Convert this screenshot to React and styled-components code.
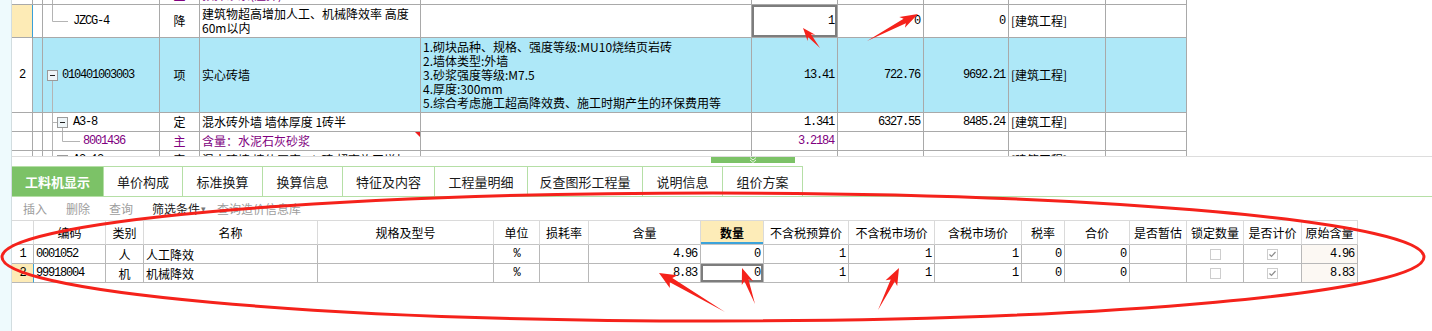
import React from "react";
import styled, { createGlobalStyle } from "styled-components";

const MONO = `"Liberation Mono", "Noto Sans CJK SC", monospace`;
const GRID = "#a9a9a9";
const GREEN = "#7cc267";
const GREEN_LINE = "#b5dfa6";

const GlobalStyle = createGlobalStyle`
  html, body {
    margin: 0;
    padding: 0;
    background: #fff;
  }
  body {
    font-family: "Noto Sans CJK SC", "Liberation Sans", sans-serif;
    font-size: 12px;
    color: #000;
  }
`;

// 上方清单表格
const TOP_COLS = "21px 10px 117px 40px 221px 331px 86px 86px 85px 97px 81px";

const TOP_ROWS = [
  { h: 19, tree: "leaf", code: "8001495-01", type: "主", name: "预拌砂浆(湿拌)", qty: "0.2678", purple: true },
  {
    h: 33, tree: "child", code: "JZCG-4", type: "降",
    name: "建筑物超高增加人工、机械降效率 高度\n60m以内",
    qty: "1", price: "0", total: "0", spec: "[建筑工程]", marker: true, pickQty: true,
  },
  {
    h: 75, num: "2", tree: "root", code: "010401003003", type: "项", name: "实心砖墙",
    desc: "1.砌块品种、规格、强度等级:MU10烧结页岩砖\n2.墙体类型:外墙\n3.砂浆强度等级:M7.5\n4.厚度:300mm\n5.综合考虑施工超高降效费、施工时期产生的环保费用等",
    qty: "13.41", price: "722.76", total: "9692.21", spec: "[建筑工程]", blue: true,
  },
  { h: 19, tree: "sub", code: "A3-8", type: "定", name: "混水砖外墙 墙体厚度 1砖半", qty: "1.341", price: "6327.55", total: "8485.24", spec: "[建筑工程]" },
  { h: 19, tree: "leaf", code: "8001436", type: "主", name: "含量：水泥石灰砂浆", qty: "3.2184", purple: true, flag: true },
  { h: 19, tree: "sub", code: "A3-12", type: "定", name: "混水砖墙 墙体厚度 1/2砖 超高施工增加", spec: "[建筑工程]" },
];

// 下方工料机表格
const BOT_COLS = "22px 72px 38px 174px 176px 46px 49px 112px 63px 85px 86px 87px 43px 65px 57px 57px 58px 56px";
const BOT_HEAD = ["", "编码", "类别", "名称", "规格及型号", "单位", "损耗率", "含量", "数量", "不含税预算价", "不含税市场价", "含税市场价", "税率", "合价", "是否暂估", "锁定数量", "是否计价", "原始含量"];
const BOT_ROWS = [
  { num: "1", code: "0001052", type: "人", name: "人工降效", amount: "4.96" },
  { num: "2", code: "99918004", type: "机", name: "机械降效", amount: "8.83", marker: true, pickQty: true },
];

const TABS = [
  ["工料机显示", 92], ["单价构成", 79], ["标准换算", 80], ["换算信息", 80], ["特征及内容", 92],
  ["工程量明细", 93], ["反查图形工程量", 115], ["说明信息", 80], ["组价方案", 80],
];

const ARROWS = [
  { tail: [725, 312], tip: [659, 273], hl: 14, hw: 15, sw: 5 },
  { tail: [755, 304], tip: [742, 268], hl: 13, hw: 12, sw: 4.5 },
  { tail: [878, 310], tip: [899, 268], hl: 14, hw: 13, sw: 4.5 },
  { tail: [820, 48], tip: [803, 28], hl: 10, hw: 10, sw: 4 },
  { tail: [867, 41], tip: [918, 14], hl: 15, hw: 12, sw: 5 },
];

function arrowPoints(tail, tip, hl, hw, sw) {
  const [tx, ty] = tail;
  const [hx, hy] = tip;
  const len = Math.hypot(hx - tx, hy - ty);
  const ux = (hx - tx) / len;
  const uy = (hy - ty) / len;
  const px = -uy;
  const py = ux;
  const bx = hx - ux * hl;
  const by = hy - uy * hl;
  const pts = [
    [tx, ty],
    [bx + (px * sw) / 2, by + (py * sw) / 2],
    [bx + (px * hw) / 2 - ux * 3, by + (py * hw) / 2 - uy * 3],
    [hx, hy],
    [bx - (px * hw) / 2 - ux * 3, by - (py * hw) / 2 - uy * 3],
    [bx - (px * sw) / 2, by - (py * sw) / 2],
  ];
  return pts.map((p) => p.map((v) => v.toFixed(1)).join(",")).join(" ");
}

function Tree({ kind, h }) {
  const mid = Math.floor(h / 2) + 0.5;
  const line = "#b4b4b4";
  const box = (x) => (
    <g>
      <rect x={x + 0.5} y={mid - 5} width="10" height="10" fill="#eef5f8" stroke="#9a9a9a" />
      <line x1={x + 3} y1={mid} x2={x + 8} y2={mid} stroke="#222" />
    </g>
  );
  if (kind === "child") {
    return (
      <TreeSvg width="30" height={h}>
        <path d={`M9.5 0 V${mid} H25`} stroke={line} fill="none" />
      </TreeSvg>
    );
  }
  if (kind === "root") {
    return (
      <TreeSvg width="19" height={h}>
        <path d={`M9.5 ${mid + 5} V${h}`} stroke={line} />
        {box(4)}
      </TreeSvg>
    );
  }
  if (kind === "sub") {
    return (
      <TreeSvg width="30" height={h}>
        <path d={`M9.5 0 V${h} M9.5 ${mid} H14 M19.5 ${mid + 5} V${h}`} stroke={line} fill="none" />
        {box(14)}
      </TreeSvg>
    );
  }
  return (
    <TreeSvg width="40" height={h}>
      <path d={`M9.5 0 V${h} M19.5 0 V${mid} H37`} stroke={line} fill="none" />
    </TreeSvg>
  );
}

function CheckBox({ checked }) {
  return (
    <Check>
      {checked && (
        <svg width="9" height="9" viewBox="0 0 9 9">
          <path d="M1.5 4.5 L3.5 6.5 L7.5 2" stroke="#8c8c8c" strokeWidth="1.2" fill="none" />
        </svg>
      )}
    </Check>
  );
}

function App() {
  return (
    <Page>
      <GlobalStyle />
      <LeftStrip />
      <Main>
        <TopPane>
          <TopTable>
            {TOP_ROWS.map((r, i) => (
              <TopRow key={i} $h={r.h} $bg={r.blue ? "#aee8f8" : "#fff"}>
                <TCell $align="center" $mono $bg={r.marker ? "#fdebb6" : "#fff"} $marker={r.marker}>
                  {r.num}
                </TCell>
                <TCell />
                <TCell $tree $purple={r.purple}>
                  <Tree kind={r.tree} h={r.h - 1} />
                  <Mono>{r.code}</Mono>
                </TCell>
                <TCell $align="center" $purple={r.purple}>{r.type}</TCell>
                <TCell $purple={r.purple} $flag={r.flag}>{r.name}</TCell>
                <TCell>{r.desc}</TCell>
                <TCell $align="right" $mono $purple={r.purple} $picked={r.pickQty}>{r.qty}</TCell>
                <TCell $align="right" $mono>{r.price}</TCell>
                <TCell $align="right" $mono>{r.total}</TCell>
                <TCell>{r.spec}</TCell>
                <TCell />
              </TopRow>
            ))}
          </TopTable>
        </TopPane>

        <Splitter>
          <Handle>
            <svg width="10" height="6" viewBox="0 0 10 6">
              <path d="M2 0.5 L5 3 L8 0.5 M2 3 L5 5.5 L8 3" stroke="#e8f5e2" fill="none" />
            </svg>
          </Handle>
        </Splitter>

        <TabBar>
          {TABS.map(([label, w], i) => (
            <Tab key={label} $w={w} $active={i === 0}>{label}</Tab>
          ))}
        </TabBar>

        <Toolbar>
          <ToolItem>插入</ToolItem>
          <ToolItem>删除</ToolItem>
          <ToolItem>查询</ToolItem>
          <ToolItem $on>
            筛选条件<Caret>▾</Caret>
          </ToolItem>
          <ToolItem>查询造价信息库</ToolItem>
        </Toolbar>

        <BotTable>
          <BotRow $head>
            {BOT_HEAD.map((h, i) => (
              <HCell key={i} $sort={h === "数量"}>{h}</HCell>
            ))}
          </BotRow>
          {BOT_ROWS.map((r) => (
            <BotRow key={r.num}>
              <BCell $align="center" $mono $bg={r.marker ? "#fdebb6" : "#fff"} $marker={r.marker}>{r.num}</BCell>
              <BCell $mono>{r.code}</BCell>
              <BCell $align="center">{r.type}</BCell>
              <BCell>{r.name}</BCell>
              <BCell />
              <BCell $align="center" $mono>%</BCell>
              <BCell />
              <BCell $align="right" $mono>{r.amount}</BCell>
              <BCell $align="right" $mono $picked={r.pickQty}>0</BCell>
              <BCell $align="right" $mono>1</BCell>
              <BCell $align="right" $mono>1</BCell>
              <BCell $align="right" $mono>1</BCell>
              <BCell $align="right" $mono>0</BCell>
              <BCell $align="right" $mono>0</BCell>
              <BCell />
              <BCell $align="center"><CheckBox /></BCell>
              <BCell $align="center"><CheckBox checked /></BCell>
              <BCell $align="right" $mono $bg="#fcf8f3">{r.amount}</BCell>
            </BotRow>
          ))}
        </BotTable>
      </Main>

      {/* 红色标注 */}
      <Overlay width="1432" height="331" viewBox="0 0 1432 331">
        <ellipse cx="713" cy="257" rx="711" ry="64" fill="none" stroke="#f5221b" strokeWidth="3" />
        {ARROWS.map((a, i) => (
          <polygon key={i} points={arrowPoints(a.tail, a.tip, a.hl, a.hw, a.sw)} fill="#f5221b" />
        ))}
      </Overlay>
    </Page>
  );
}

export default App;

const Page = styled.div`
  position: relative;
  display: flex;
  width: 1432px;
  height: 331px;
  overflow: hidden;
  background: #fff;
`;

const LeftStrip = styled.div`
  width: 11px;
  flex: none;
  background: #eefafd;
  border-right: 1px solid #d2dde0;
`;

const Main = styled.div`
  flex: 1;
  display: flex;
  flex-direction: column;
  min-width: 0;
`;

const TopPane = styled.div`
  height: 156px;
  overflow: hidden;
  border-bottom: 1px solid #dddddd;
`;

const TopTable = styled.div`
  margin-top: -14px;
`;

const TopRow = styled.div`
  display: grid;
  grid-template-columns: ${TOP_COLS};
  width: 1175px;
  height: ${(p) => p.$h}px;
  background: ${(p) => p.$bg};
`;

const TCell = styled.div`
  position: relative;
  display: flex;
  align-items: center;
  justify-content: ${(p) => (p.$align === "right" ? "flex-end" : p.$align === "center" ? "center" : "flex-start")};
  padding: ${(p) => (p.$tree ? "0" : p.$align === "right" ? "0 3px 0 0" : p.$align === "center" ? "0" : "0 0 0 2px")};
  box-sizing: border-box;
  border-right: 1px solid ${(p) => (p.$marker ? "#3a9fd8" : GRID)};
  border-bottom: 1px solid ${GRID};
  background: ${(p) => p.$bg || "transparent"};
  box-shadow: ${(p) => (p.$picked ? "inset 0 0 0 2px #7d7d7d" : "none")};
  color: ${(p) => (p.$purple ? "#800080" : "#000")};
  font-family: ${(p) => (p.$mono ? MONO : "inherit")};
  font-size: 12px;
  letter-spacing: ${(p) => (p.$mono ? "-1.2px" : "0")};
  line-height: 14px;
  white-space: pre-line;
  overflow: hidden;

  &::after {
    content: "";
    display: ${(p) => (p.$flag ? "block" : "none")};
    position: absolute;
    top: 0;
    right: 0;
    border-top: 5px solid #ee1c1c;
    border-left: 5px solid transparent;
  }
`;

const TreeSvg = styled.svg`
  flex: none;
  display: block;
`;

const Mono = styled.span`
  font-family: ${MONO};
  font-size: 12px;
  letter-spacing: -1.2px;
`;

const Splitter = styled.div`
  height: 9px;
  flex: none;
`;

const Handle = styled.div`
  margin-left: 699px;
  width: 84px;
  height: 6px;
  background: ${GREEN};
  display: flex;
  justify-content: center;
  align-items: flex-start;
`;

const TabBar = styled.div`
  display: flex;
  height: 31px;
  flex: none;
  box-sizing: border-box;
  border-bottom: 1px solid ${GREEN_LINE};
`;

const Tab = styled.div`
  width: ${(p) => p.$w}px;
  box-sizing: border-box;
  display: flex;
  align-items: center;
  justify-content: center;
  border-top: 1px solid ${GREEN_LINE};
  border-right: 1px solid ${GREEN_LINE};
  background: ${(p) => (p.$active ? GREEN : "#fff")};
  color: ${(p) => (p.$active ? "#fff" : "#1a1a1a")};
  font-weight: ${(p) => (p.$active ? 700 : 400)};
  font-size: 13px;
`;

const Toolbar = styled.div`
  display: flex;
  align-items: center;
  gap: 19px;
  height: 23px;
  flex: none;
  padding-left: 11px;
`;

const ToolItem = styled.span`
  color: ${(p) => (p.$on ? "#1a1a1a" : "#9d9d9d")};
  font-size: 12px;
  display: flex;
  align-items: center;
`;

const Caret = styled.span`
  font-size: 9px;
  color: #777;
  margin-left: 1px;
  margin-right: -8px;
`;

const BotTable = styled.div`
  width: 1346px;
  border-top: 1px solid #dadada;
`;

const BotRow = styled.div`
  display: grid;
  grid-template-columns: ${BOT_COLS};
  height: ${(p) => (p.$head ? 24 : 19)}px;
`;

const HCell = styled.div`
  display: flex;
  align-items: center;
  justify-content: center;
  box-sizing: border-box;
  border-right: 1px solid #dadada;
  border-bottom: 1px solid #c4c4c4;
  background: ${(p) => (p.$sort ? "#fdecb8" : "#fff")};
  box-shadow: ${(p) => (p.$sort ? "inset 0 -2px 0 #3ca3da" : "none")};
  font-weight: ${(p) => (p.$sort ? 700 : 400)};
  font-size: 12px;
`;

const BCell = styled.div`
  display: flex;
  align-items: center;
  justify-content: ${(p) => (p.$align === "right" ? "flex-end" : p.$align === "center" ? "center" : "flex-start")};
  padding: ${(p) => (p.$align === "right" ? "0 3px 0 0" : p.$align === "center" ? "0" : "0 0 0 2px")};
  box-sizing: border-box;
  border-right: 1px solid ${(p) => (p.$marker ? "#3a9fd8" : "#b8b8b8")};
  border-bottom: 1px solid #b8b8b8;
  background: ${(p) => p.$bg || "#fff"};
  box-shadow: ${(p) => (p.$picked ? "inset 0 0 0 2px #7d7d7d" : "none")};
  font-family: ${(p) => (p.$mono ? MONO : "inherit")};
  font-size: 12px;
  letter-spacing: ${(p) => (p.$mono ? "-1.2px" : "0")};
`;

const Check = styled.span`
  width: 11px;
  height: 11px;
  box-sizing: border-box;
  border: 1px solid #cdcdcd;
  background: #fff;
  display: inline-flex;
  align-items: center;
  justify-content: center;
`;

const Overlay = styled.svg`
  position: absolute;
  left: 0;
  top: 0;
  pointer-events: none;
`;
